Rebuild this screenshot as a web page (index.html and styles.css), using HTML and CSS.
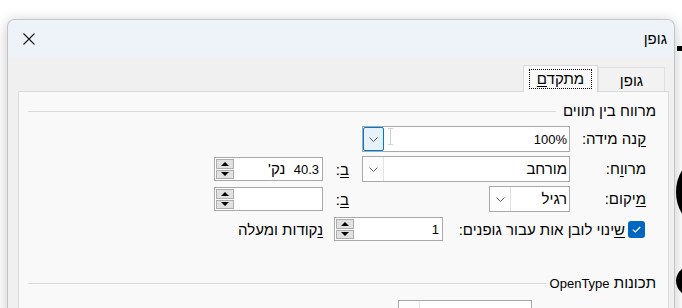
FILE: index.html
```html
<!DOCTYPE html>
<html lang="he">
<head>
    <meta charset="UTF-8">
    <meta name="viewport" content="width=device-width, initial-scale=1.0">
    <title>גופן</title>
    <link rel="stylesheet" href="styles.css">
</head>
<body>
    <!-- bits of the document behind the dialog -->
    <div class="behind behind-dot"></div>
    <div class="behind behind-bowl"></div>
    <div class="behind behind-tail"></div>

    <div class="dialog" dir="rtl">
        <div class="titlebar">
            <span class="title">גופן</span>
            <button class="close" aria-label="סגור">
                <svg width="12" height="12" viewBox="0 0 12 12"><path d="M0.5 0.5 L11.5 11.5 M11.5 0.5 L0.5 11.5" stroke="#1a1a1a" stroke-width="1.1" fill="none"/></svg>
            </button>
        </div>

        <div class="dialog-body">
            <div class="tabs">
                <div class="tab">גופ<u>ן</u></div>
                <div class="tab active"><span class="focus">מתקד<u>ם</u></span></div>
            </div>

            <div class="panel">
                <div class="group-title"><span>מרווח בין תווים</span><div class="rule"></div></div>

                <div class="form-grid">
                    <label class="label"><u>ק</u>נה מידה:</label>
                    <div class="combo focused">
                        <span class="value"><span class="latin">100%</span></span>
                        <span class="drop"><svg width="9" height="5" viewBox="0 0 9 5"><polyline points="0.5,0.5 4.5,4.5 8.5,0.5" stroke="#606060" fill="none"/></svg></span>
                        <span class="ibeam"></span>
                    </div>
                    <span></span>
                    <span></span>

                    <label class="label">מרו<u>ו</u>ח:</label>
                    <div class="combo">
                        <span class="value">מורחב</span>
                        <span class="drop"><svg width="9" height="5" viewBox="0 0 9 5"><polyline points="0.5,0.5 4.5,4.5 8.5,0.5" stroke="#606060" fill="none"/></svg></span>
                    </div>
                    <label class="by"><u>ב</u>:</label>
                    <div class="spin">
                        <span class="value"><span class="latin">40.3</span>&nbsp; נק'</span>
                        <span class="arrows"><span class="up"></span><span class="down"></span></span>
                    </div>

                    <label class="label"><u>מ</u>יקום:</label>
                    <div class="combo short">
                        <span class="value">רגיל</span>
                        <span class="drop"><svg width="9" height="5" viewBox="0 0 9 5"><polyline points="0.5,0.5 4.5,4.5 8.5,0.5" stroke="#606060" fill="none"/></svg></span>
                    </div>
                    <label class="by"><u>ב</u>:</label>
                    <div class="spin">
                        <span class="value"></span>
                        <span class="arrows"><span class="up"></span><span class="down"></span></span>
                    </div>
                </div>

                <div class="kern-row">
                    <span class="checkbox"><svg width="9" height="7" viewBox="0 0 9 7"><polyline points="0.8,3.6 3.3,6 8.2,1" stroke="#fff" stroke-width="1.1" fill="none"/></svg></span>
                    <label class="kern-label"><u>ש</u>ינוי לובן אות עבור גופנים:</label>
                    <div class="spin">
                        <span class="value"><span class="latin">1</span></span>
                        <span class="arrows"><span class="up"></span><span class="down"></span></span>
                    </div>
                    <span class="points"><u>נ</u>קודות ומעלה</span>
                </div>

                <div class="group-title second"><span>תכונות <span class="latin">OpenType</span></span><div class="rule"></div></div>

                <div class="combo ligatures">
                    <span class="value"></span>
                    <span class="drop"><svg width="9" height="5" viewBox="0 0 9 5"><polyline points="0.5,0.5 4.5,4.5 8.5,0.5" stroke="#606060" fill="none"/></svg></span>
                </div>
            </div>
        </div>
    </div>
</body>
</html>
```

FILE: styles.css
```css
body {
    margin: 0;
    padding: 19px 0 0 7px;
    width: 682px;
    height: 308px;
    box-sizing: border-box;
    overflow: hidden;
    position: relative;
    background-color: #fff;
    font-family: "Liberation Sans", "DejaVu Sans", sans-serif;
    font-size: 15px;
    color: #000;
    white-space: nowrap;
}

/* Hebrew runs wide in the original UI font, latin/digits do not */
.latin {
    font-size: 13px;
}

u {
    text-underline-offset: 2px;
}

/* document showing behind the dialog */
.behind {
    position: absolute;
    background-color: #000;
}

.behind-dot {
    left: 677px;
    top: 46px;
    width: 8px;
    height: 5px;
}

.behind-bowl {
    left: 676px;
    top: 162px;
    width: 40px;
    height: 60px;
    border-radius: 50%;
}

.behind-tail {
    left: 676px;
    top: 264px;
    width: 40px;
    height: 34px;
    border-radius: 50%;
}

.dialog {
    position: relative;
    z-index: 1;
    width: 668px;
    height: 300px;
    box-sizing: border-box;
    border: 1px solid #c4c4c4;
    border-bottom: none;
    border-radius: 8px 8px 0 0;
    overflow: hidden;
    background-color: #f0f0f0;
    box-shadow: 0 2px 14px rgba(0, 0, 0, 0.22);
}

.titlebar {
    height: 37px;
    display: flex;
    align-items: center;
    justify-content: space-between;
    padding: 0 7px 0 14px;
    background-color: #eef2f9;
}

.close {
    border: none;
    background: none;
    padding: 0;
    width: 14px;
    height: 14px;
    display: flex;
    align-items: center;
    justify-content: center;
}

.dialog-body {
    padding: 8px 5px 0 10px;
}

.tabs {
    display: flex;
    align-items: flex-end;
    padding-right: 4px;
    height: 26px;
}

.tab {
    box-sizing: border-box;
    width: 67px;
    height: 24px;
    line-height: 16px;
    padding-top: 5px;
    text-align: center;
    background-color: #f2f2f2;
    border: 1px solid #e0e0e0;
    border-bottom: none;
}

.tab.active {
    position: relative;
    z-index: 2;
    width: 75px;
    height: 27px;
    margin-bottom: -1px;
    padding-top: 3px;
    background-color: #f9f9f9;
    border-color: #dadada;
}

.focus {
    display: inline-block;
    padding: 1px 7px;
    border: 1px dotted #000;
}

.panel {
    height: 230px;
    padding-top: 11px;
    background-color: #f9f9f9;
    border: 1px solid #dadada;
    border-bottom: none;
}

.group-title {
    display: flex;
    align-items: center;
    line-height: 16px;
    padding: 0 12px 0 9px;
}

.group-title .rule {
    flex: 1;
    height: 1px;
    margin-right: 7px;
    background-color: #d9d9d9;
}

.group-title.second {
    margin-top: 31px;
}

.group-title.second .rule {
    margin-right: 4px;
}

.form-grid {
    display: grid;
    grid-template-columns: 76px 208px 39px 109px;
    grid-auto-rows: 30px;
    align-items: center;
    margin-top: 5px;
    padding-right: 22px;
}

.label {
    line-height: 16px;
}

.by {
    padding-right: 13px;
}

.combo {
    position: relative;
    display: flex;
    height: 26px;
    box-sizing: border-box;
    border: 1px solid #a9a9a9;
    background-color: #fff;
}

.combo .value {
    flex: 1;
    line-height: 24px;
    padding-right: 2px;
}

.combo .drop {
    width: 20px;
    display: flex;
    align-items: center;
    justify-content: center;
    border-right: 1px solid #e3e3e3;
    background-color: #fdfdfd;
}

.combo.focused .drop {
    background-color: #e5f1fb;
    border: 1px solid #0078d7;
    border-radius: 2px;
    width: 19px;
}

.combo.short {
    width: 81px;
}

.ibeam {
    position: absolute;
    left: 25px;
    top: 1px;
    width: 5px;
    height: 17px;
    border-top: 1px solid #d0d0d0;
    border-bottom: 1px solid #d0d0d0;
    box-sizing: border-box;
    background: linear-gradient(#d0d0d0, #d0d0d0) center / 1px 100% no-repeat;
}

.spin {
    display: flex;
    width: 109px;
    height: 24px;
    box-sizing: border-box;
    border: 1px solid #a9a9a9;
    background-color: #fff;
}

.spin .value {
    flex: 1;
    line-height: 22px;
    padding-right: 3px;
}

.arrows {
    display: flex;
    flex-direction: column;
    gap: 1px;
    width: 18px;
    padding: 1px 1px 1px 0;
    margin-left: 1px;
}

.arrows span {
    flex: 1;
    display: flex;
    align-items: center;
    justify-content: center;
    background-color: #e1e1e1;
    border: 1px solid #adadad;
}

.arrows .up::before,
.arrows .down::before {
    content: "";
    border-left: 4px solid transparent;
    border-right: 4px solid transparent;
}

.arrows .up::before {
    border-bottom: 4px solid #000;
}

.arrows .down::before {
    border-top: 4px solid #000;
}

.kern-row {
    display: flex;
    align-items: center;
    height: 30px;
    padding-right: 23px;
}

.checkbox {
    width: 17px;
    height: 17px;
    display: flex;
    align-items: center;
    justify-content: center;
    border-radius: 3px;
    background-color: #0067c0;
}

.kern-label {
    margin-right: 3px;
    width: 165px;
}

.kern-row .spin {
    margin-right: 17px;
}

.points {
    margin-right: 11px;
}

.combo.ligatures {
    width: 134px;
    margin: 8px 136px 0 0;
}
```
